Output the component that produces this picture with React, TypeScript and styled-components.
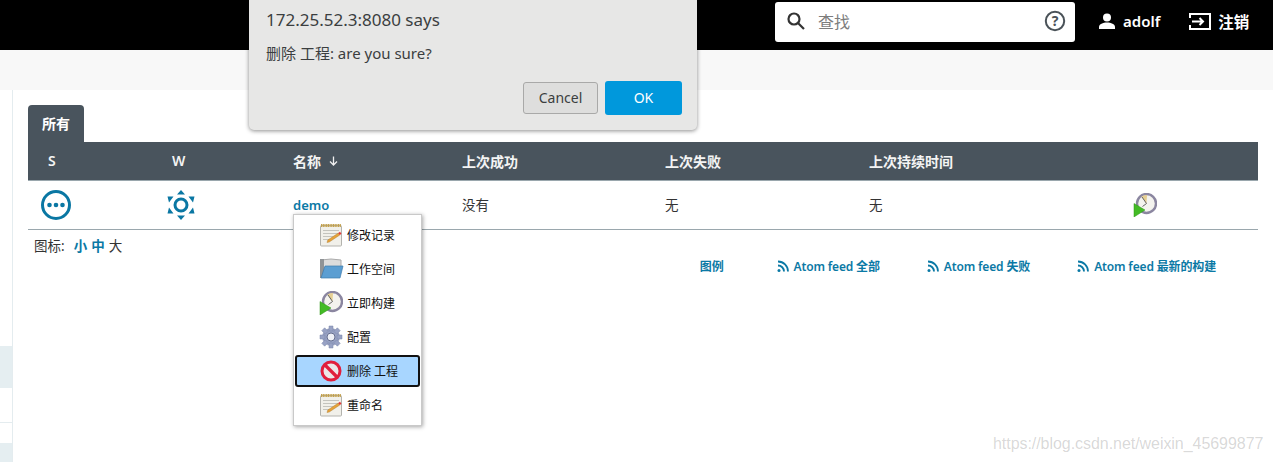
import React from "react";
import styled, { createGlobalStyle } from "styled-components";

const Global = createGlobalStyle`
  html, body { margin: 0; padding: 0; background: #fff; }
  body { font-family: "Noto Sans", "Noto Sans CJK SC", sans-serif; color: #333; }
  * { box-sizing: border-box; }
`;
const Page = styled.div`position: relative; width: 1273px; height: 462px; overflow: hidden; background: #fff;`;
const Header = styled.header`height: 50px; background: #000; display: flex; align-items: flex-start; padding: 2px 0 0 775px; color: #fff;`;
const SearchBox = styled.div`width: 300px; height: 40px; background: #fff; border-radius: 3px; display: flex; align-items: center; padding: 0 9px 2px 9px; color: #333;`;
const SearchHint = styled.span`flex: 1; margin-left: 10px; font-size: 16px; color: #7d7d7d;`;
const UserLink = styled.div`display: flex; align-items: center; height: 38px; margin-left: ${p => p.$ml}px; font-size: ${p => p.$fs}px; font-weight: 600; color: #fff; gap: ${p => p.$gap}px;`;
const SubBar = styled.div`height: 40px; background: #f8f8f8;`;
const Body = styled.div`display: flex; height: 372px;`;
const Side = styled.aside`width: 13px; border-right: 1px solid #e4ecef; display: flex; flex-direction: column; padding-top: 256px;`;
const Band = styled.div`height: ${p => p.$h}px; background: ${p => p.$bg}; border-bottom: ${p => (p.$line ? "1px solid #e4ecef" : "none")};`;
const Main = styled.main`flex: 1; padding: 15px 15px 0 15px;`;
const Tab = styled.div`width: 56px; height: 37px; background: #49545d; color: #fff; font-size: 14px; font-weight: 700; border-radius: 4px 4px 0 0; display: flex; align-items: center; justify-content: center; padding-bottom: 1px;`;
const Row = styled.div`
  display: grid;
  grid-template-columns: 124px 121px 169px 203px 204px 265px 144px;
  align-items: center;
`;
const HeadRow = styled(Row)`height: 39px; background: #49545d; color: #f4f4f4; font-size: 14px; font-weight: 600; border-bottom: 1px solid #9aa7ad; padding-bottom: 1px;`;
const DataRow = styled(Row)`height: 49px; font-size: 13.5px; border-bottom: 1px solid #9aa7ad; color: #333; padding-bottom: 2px;`;
const Cell = styled.div`padding-left: 20px; display: flex; align-items: center;`;
const IconCell = styled.div`padding-left: ${p => p.$pl}px; display: flex; align-items: center; margin-top: 2px;`;
const Link = styled.a`color: #0b79a5; font-weight: 600;`;
const JobLink = styled(Link)`font-size: 13px; margin-top: 1px;`;
const Foot = styled.div`display: flex; align-items: flex-start; justify-content: space-between;`;
const Sizes = styled.div`font-size: 13.5px; padding: 5px 0 0 6px; color: #333; display: flex; gap: 4px;`;
const SizesLabel = styled.span`margin-right: 5px;`;
const Legend = styled.div`display: flex; font-size: 12px; font-weight: 600; letter-spacing: -.15px; padding-top: 27px; margin-right: 42px;`;
const FeedLink = styled.a`color: #0b79a5; display: flex; align-items: center; gap: 5px; margin-left: ${p => p.$ml}px;`;
const Dialog = styled.div`
  position: absolute; left: 249px; top: -10px; width: 448px; height: 140px;
  background: #e7e7e6; border-radius: 0 0 5px 5px; box-shadow: 0 1px 4px rgba(0,0,0,.45);
  padding: 19px 15px 0 17px; color: #3b3e3f;
  display: flex; flex-direction: column;
`;
const DialogTitle = styled.div`font-size: 17px; line-height: 22px;`;
const DialogText = styled.div`font-size: 15px; line-height: 20px; margin-top: 12px;`;
const DialogActions = styled.div`display: flex; justify-content: flex-end; gap: 7px; margin-top: 18px;`;
const CancelBtn = styled.div`width: 75px; height: 32px; margin-top: 1px; padding-bottom: 2px; border: 1px solid #a9a9a8; border-radius: 3px; background: #dededd; font-size: 14px; display: flex; align-items: center; justify-content: center;`;
const OkBtn = styled.div`width: 77px; height: 34px; padding-bottom: 2px; border-radius: 3px; background: #0098dc; color: #fff; font-size: 14px; display: flex; align-items: center; justify-content: center;`;
const Menu = styled.div`
  position: absolute; left: 293px; top: 214px; width: 129px; height: 212px; background: #fff;
  border: 1px solid #c9c9c9; box-shadow: 1px 1px 4px rgba(0,0,0,.35); padding: 3px 1px;
  display: flex; flex-direction: column;
`;
const MenuItem = styled.div`
  height: 34px; display: flex; align-items: center; gap: 3px; padding-left: 23px; font-size: 12px; color: #111;
  ${p => p.$active && `background: #a8d6ff; border: 2px solid #111; border-radius: 3px; padding-left: 21px; margin: 1px 0; height: 32px;`}
`;
const MenuIcon = styled.span`width: 26px; height: 24px; display: flex; justify-content: center; align-items: center;`;
const Watermark = styled.div`position: absolute; left: 993px; top: 435px; font-family: "Liberation Sans", sans-serif; font-size: 16px; letter-spacing: -.05px; color: rgba(90,90,90,.24); white-space: nowrap;`;
const SortMark = styled.span`margin-left: 8px; display: inline-flex;`;

const Search = () => (<svg width="24" height="24" viewBox="0 0 24 24" fill="none" stroke="#333" strokeWidth="2.2"><circle cx="10" cy="10" r="5.5"/><path d="M14 14l6 6"/></svg>);
const Help = () => (<svg width="22" height="22" viewBox="0 0 22 22" fill="none"><circle cx="11" cy="11" r="9.200" stroke="#4a5258" strokeWidth="2"/><text x="11" y="16" textAnchor="middle" fontSize="14" fontWeight="700" fill="#4a5258" fontFamily="Noto Sans">?</text></svg>);
const User = () => (<svg width="18" height="18" viewBox="0 0 18 18" fill="#fff"><circle cx="9" cy="5.5" r="4"/><path d="M1 17v-2c0-3 4-4.5 8-4.5s8 1.500 8 4.500v2z"/></svg>);
const Logout = () => (<svg width="22" height="18" viewBox="0 0 22 18" fill="none" stroke="#fff" strokeWidth="2"><path d="M1 6V2h20v15H1v-4"/><path d="M3 9.500h11M10.500 6l3.500 3.500-3.500 3.500"/></svg>);
const Arrow = () => (<svg width="9" height="10" viewBox="0 0 9 10" fill="none" stroke="#f0f0f0" strokeWidth="1.300"><path d="M4.500 0.500v8M1 5.500l3.500 3.500L8 5.500"/></svg>);
const Dots = () => (<svg width="32" height="32" viewBox="0 0 32 32"><circle cx="16" cy="16" r="13.500" fill="none" stroke="#0a77a3" strokeWidth="3"/><circle cx="9.500" cy="16" r="2.300" fill="#0a77a3"/><circle cx="16" cy="16" r="2.300" fill="#0a77a3"/><circle cx="22.500" cy="16" r="2.300" fill="#0a77a3"/></svg>);
const Sun = () => (<svg width="30" height="34" viewBox="0 0 30 34" fill="#0a77a3"><circle cx="15" cy="17" r="6" fill="none" stroke="#0a77a3" strokeWidth="3"/><path d="M15 2l4 4.500h-8zM15 32l4-4.500h-8zM1.500 8.500h6l-4.500 6zM28.500 8.500h-6l4.500 6zM1.500 25.500h6l-4.500-6zM28.500 25.500h-6l4.500-6z"/></svg>);
const Clock = ({ s = 24 }) => (<svg width={s} height={s} viewBox="0 0 24 24"><circle cx="13.500" cy="10.500" r="9.500" fill="#f4f3ee" stroke="#8b86a0" strokeWidth="2.400"/><path d="M13.500 10.500L8.500 3.500A8.500 8.500 0 0 1 14 2z" fill="#e6cf92"/><path d="M9 4l4.500 6.500-4 3" fill="none" stroke="#555" strokeWidth=".9"/><path d="M1 10.500l11 6.500-11 7z" fill="#43bb25" stroke="#2f9416" strokeWidth=".5"/></svg>);
const Note = () => (<svg width="24" height="24" viewBox="0 0 24 24"><rect x="1.500" y="2.500" width="21" height="20.500" rx="1" fill="#f1f0ea" stroke="#b3b3ae"/><path d="M2 2.500h20" stroke="#c2a04c" strokeWidth="3" strokeDasharray="1.200 .5"/><path d="M4 7.500h16M4 10.500h16M4 13.500h11M4 16.500h7" stroke="#c4c4be" strokeWidth="1"/><path d="M8 19.500l.8-2.500 10.500-7 1.500 2-10.500 7z" fill="#e5a23a" stroke="#a87424" strokeWidth=".4"/><path d="M19.300 10l1.500 2 1.700-1.200-1.500-2z" fill="#e03b3b"/></svg>);
const Folder = () => (<svg width="25" height="22" viewBox="0 0 25 22"><path d="M2 2l10-1 10 1v8H2z" fill="#dcdcdc" stroke="#aaa"/><rect x="1" y="1" width="4" height="19" fill="#8f9396"/><path d="M6 8h18l-3 12H2z" fill="#5b9ed2" stroke="#3d7bae" strokeWidth=".7"/></svg>);
const Gear = () => (<svg width="24" height="24" viewBox="0 0 24 24"><g fill="#98a2c4" stroke="#7a85a8" strokeWidth=".5"><circle cx="12" cy="12" r="8.500"/><path d="M10 1h4v5h-4zM10 18h4v5h-4zM1 10h5v4H1zM18 10h5v4h-5z"/><path d="M10 1h4v5h-4zM10 18h4v5h-4zM1 10h5v4H1zM18 10h5v4h-5z" transform="rotate(45 12 12)"/></g><circle cx="12" cy="12" r="4" fill="#eef0f6" stroke="#666f90"/></svg>);
const NoEntry = () => (<svg width="24" height="24" viewBox="0 0 24 24" fill="none"><circle cx="12" cy="12" r="9" fill="#ece6e8" stroke="#e11e3c" strokeWidth="3"/><path d="M5.500 5.500l13 13" stroke="#e11e3c" strokeWidth="3.200"/></svg>);
const Rss = () => (<svg width="13" height="13" viewBox="0 0 13 13" fill="none" stroke="#0b79a5" strokeWidth="1.800"><path d="M2 5.500a6 6 0 0 1 6 6M2 1.500a10 10 0 0 1 10 10"/><circle cx="3" cy="10.500" r="1.500" fill="#0b79a5" stroke="none"/></svg>);

const menu = [
  { t: "修改记录", i: <Note /> }, { t: "工作空间", i: <Folder /> }, { t: "立即构建", i: <Clock /> },
  { t: "配置", i: <Gear /> }, { t: "删除 工程", i: <NoEntry />, a: true }, { t: "重命名", i: <Note /> },
];

export default function App() {
  return (
    <Page>
      <Global />
      <Header>
        <SearchBox><Search /><SearchHint>查找</SearchHint><Help /></SearchBox>
        <UserLink $ml={23} $gap={7} $fs={15}><User />adolf</UserLink>
        <UserLink $ml={29} $gap={7} $fs={15.5}><Logout />注销</UserLink>
      </Header>
      <SubBar />
      <Body>
        <Side>
          <Band $h={42} $bg="#e5eef1" />
          <Band $h={35} $bg="#fff" $line />
          <Band $h={20} $bg="#fff" />
          <Band $h={19} $bg="#e5eef1" />
        </Side>
        <Main>
          <Tab>所有</Tab>
          <HeadRow>
            <Cell>S</Cell><Cell>W</Cell><Cell>名称<SortMark><Arrow /></SortMark></Cell><Cell>上次成功</Cell><Cell>上次失败</Cell><Cell>上次持续时间</Cell><Cell />
          </HeadRow>
          <DataRow>
            <IconCell $pl={12}><Dots /></IconCell>
            <IconCell $pl={14}><Sun /></IconCell>
            <Cell><JobLink>demo</JobLink></Cell>
            <Cell>没有</Cell><Cell>无</Cell><Cell>无</Cell>
            <IconCell $pl={19}><Clock /></IconCell>
          </DataRow>
          <Foot>
            <Sizes><SizesLabel>图标:</SizesLabel><Link>小</Link><Link>中</Link><span>大</span></Sizes>
            <Legend>
              <FeedLink $ml={0}>图例</FeedLink>
              <FeedLink $ml={52}><Rss />Atom feed 全部</FeedLink>
              <FeedLink $ml={46}><Rss />Atom feed 失败</FeedLink>
              <FeedLink $ml={46}><Rss />Atom feed 最新的构建</FeedLink>
            </Legend>
          </Foot>
        </Main>
      </Body>
      <Dialog>
        <DialogTitle>172.25.52.3:8080 says</DialogTitle>
        <DialogText>删除 工程: are you sure?</DialogText>
        <DialogActions><CancelBtn>Cancel</CancelBtn><OkBtn>OK</OkBtn></DialogActions>
      </Dialog>
      <Menu>
        {menu.map(m => (<MenuItem key={m.t} $active={m.a}><MenuIcon>{m.i}</MenuIcon>{m.t}</MenuItem>))}
      </Menu>
      <Watermark>https://blog.csdn.net/weixin_45699877</Watermark>
    </Page>
  );
}
